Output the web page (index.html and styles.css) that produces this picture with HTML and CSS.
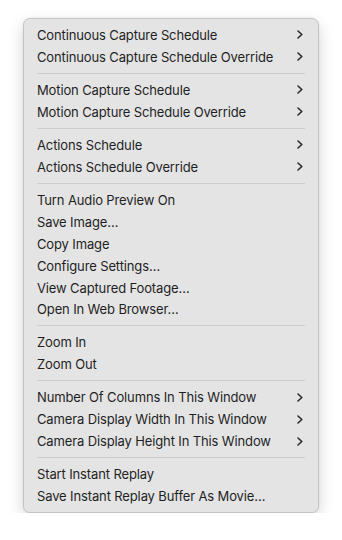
FILE: index.html
```html
<!DOCTYPE html>
<html>
<head>
<meta charset="utf-8">
<link rel="stylesheet" href="styles.css">
</head>
<body>
<div class="menu">
  <div class="item"><span>Continuous Capture Schedule</span><svg class="chev" viewBox="0 0 6 9"><path d="M1 1 L4.8 4.5 L1 8"/></svg></div>
  <div class="item"><span>Continuous Capture Schedule Override</span><svg class="chev" viewBox="0 0 6 9"><path d="M1 1 L4.8 4.5 L1 8"/></svg></div>
  <div class="sep"></div>
  <div class="item"><span>Motion Capture Schedule</span><svg class="chev" viewBox="0 0 6 9"><path d="M1 1 L4.8 4.5 L1 8"/></svg></div>
  <div class="item"><span>Motion Capture Schedule Override</span><svg class="chev" viewBox="0 0 6 9"><path d="M1 1 L4.8 4.5 L1 8"/></svg></div>
  <div class="sep"></div>
  <div class="item"><span>Actions Schedule</span><svg class="chev" viewBox="0 0 6 9"><path d="M1 1 L4.8 4.5 L1 8"/></svg></div>
  <div class="item"><span>Actions Schedule Override</span><svg class="chev" viewBox="0 0 6 9"><path d="M1 1 L4.8 4.5 L1 8"/></svg></div>
  <div class="sep"></div>
  <div class="item"><span>Turn Audio Preview On</span></div>
  <div class="item"><span>Save Image…</span></div>
  <div class="item"><span>Copy Image</span></div>
  <div class="item"><span>Configure Settings…</span></div>
  <div class="item"><span>View Captured Footage…</span></div>
  <div class="item"><span>Open In Web Browser…</span></div>
  <div class="sep"></div>
  <div class="item"><span>Zoom In</span></div>
  <div class="item"><span>Zoom Out</span></div>
  <div class="sep"></div>
  <div class="item"><span>Number Of Columns In This Window</span><svg class="chev" viewBox="0 0 6 9"><path d="M1 1 L4.8 4.5 L1 8"/></svg></div>
  <div class="item"><span>Camera Display Width In This Window</span><svg class="chev" viewBox="0 0 6 9"><path d="M1 1 L4.8 4.5 L1 8"/></svg></div>
  <div class="item"><span>Camera Display Height In This Window</span><svg class="chev" viewBox="0 0 6 9"><path d="M1 1 L4.8 4.5 L1 8"/></svg></div>
  <div class="sep"></div>
  <div class="item"><span>Start Instant Replay</span></div>
  <div class="item"><span>Save Instant Replay Buffer As Movie…</span></div>
</div>
</body>
</html>
```
FILE: styles.css
```css
html, body {
  margin: 0;
  padding: 0;
  background: #ffffff;
}
body {
  padding: 18px 0 0 23px;
  font-family: "Inter", "Liberation Sans", sans-serif;
}
.menu {
  box-sizing: border-box;
  width: 296px;
  height: 495px;
  background: #e4e4e4;
  border: 1px solid #c4c4c4;
  border-radius: 7px;
  box-shadow: 0 6px 16px rgba(0,0,0,0.16), 0 0 2px rgba(0,0,0,0.08);
  padding: 5px 0 5px 0;
  display: flex;
  flex-direction: column;
}
.item {
  height: 22px;
  display: flex;
  align-items: center;
  justify-content: space-between;
  padding: 0 15px 0 13px;
  font-size: 13px;
  color: #1f1f1f;
  letter-spacing: -0.13px;
}
.chev {
  width: 6px;
  height: 9px;
  fill: none;
  stroke: #2a2a2a;
  stroke-width: 1.6;
  stroke-linecap: round;
  stroke-linejoin: round;
}
.sep {
  height: 1px;
  margin: 5px 13px 5px 13px;
  background: #cdcdcd;
}
```
